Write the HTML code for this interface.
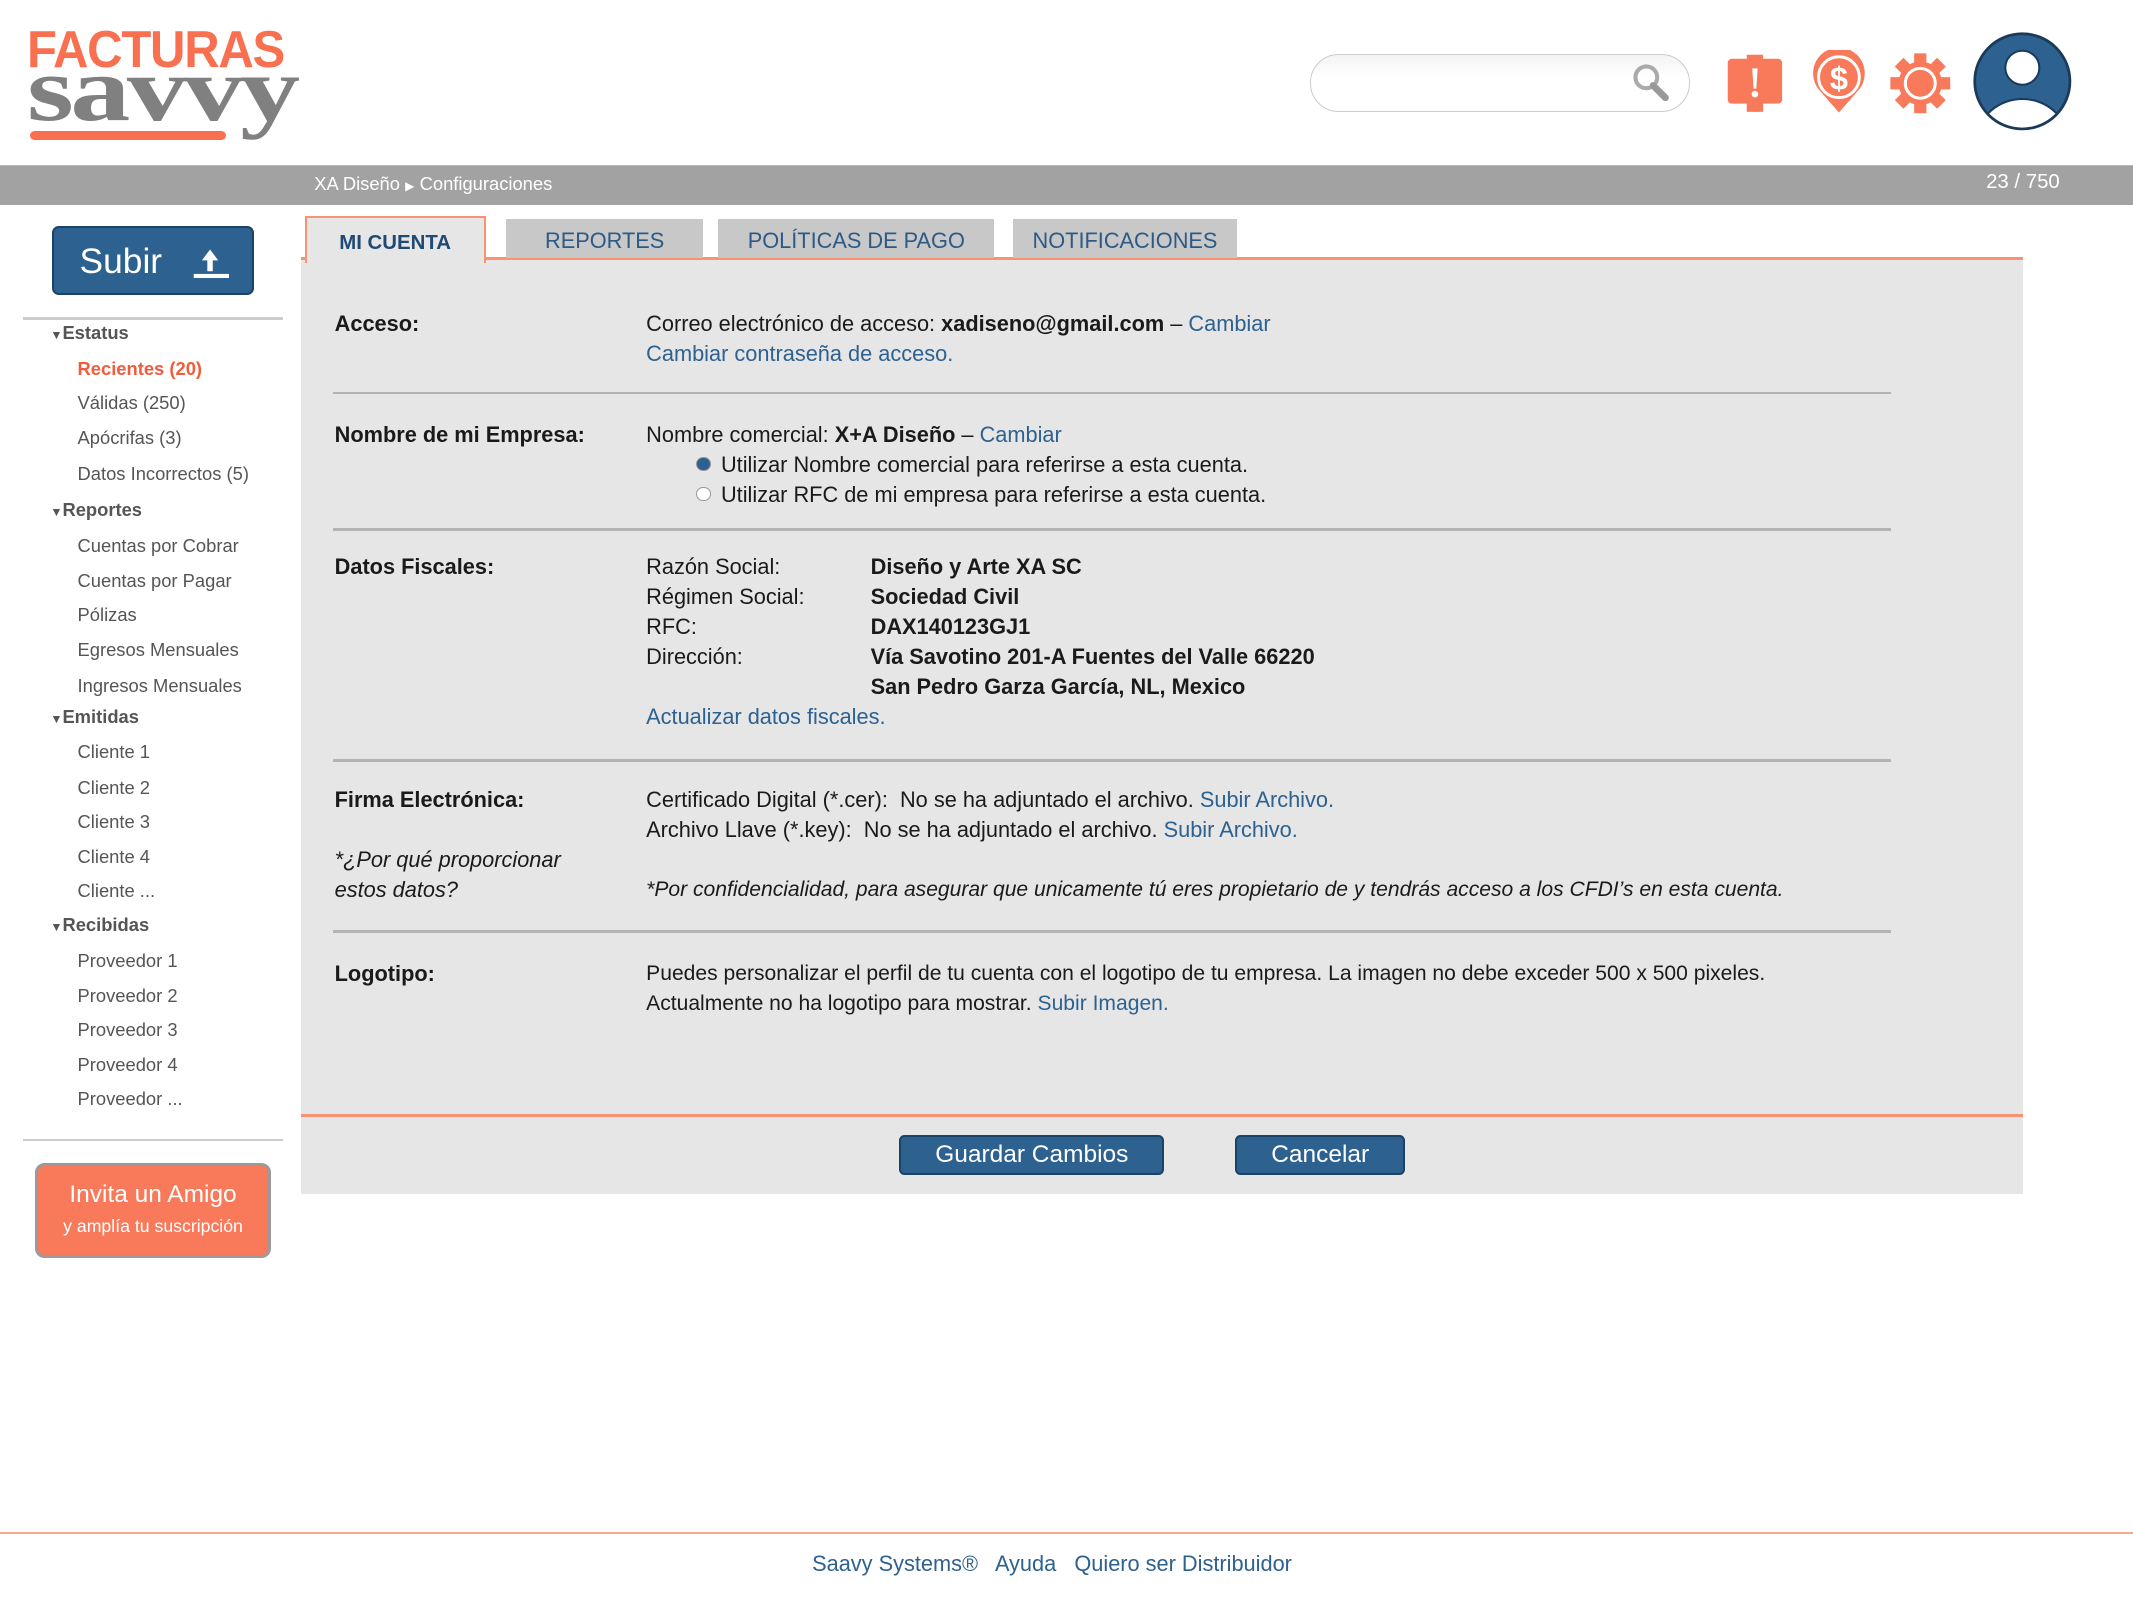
<!DOCTYPE html>
<html><head><meta charset="utf-8">
<style>
html,body{margin:0;padding:0;background:#fff;overflow:hidden}
#w{zoom:1.36033;width:1568px;height:1176px;position:relative;font-family:"Liberation Sans",sans-serif;color:#1a1a1a}
.a{position:absolute;white-space:nowrap}
.sb{font-size:13.5px;color:#555}
.sh{font-size:13.5px;color:#555;font-weight:bold}
.t{font-size:16px;line-height:22px}
.b{font-weight:bold}
.l{color:#2d6190}
.hr{position:absolute;left:245px;width:1145px;height:2px;background:#b4b4b4}
.tab{position:absolute;top:161px;height:29px;background:#c8c8c8;color:#2d5a85;font-size:16px;text-align:center;line-height:32px}
.btn{position:absolute;background:#2d6190;border:1.5px solid #1d4268;border-radius:4px;color:#fff;font-size:18px;text-align:center;box-sizing:border-box}
</style></head><body><div id="w">
<!-- logo -->
<div class="a" style="left:20px;top:14px;font-family:'Liberation Sans';font-weight:bold;font-size:38px;color:#f97050;letter-spacing:-1px;transform:scaleX(0.95);transform-origin:left">FACTURAS</div>
<div class="a" style="left:20px;top:34px;font-family:'Liberation Serif';font-weight:bold;font-size:68px;color:#808080;letter-spacing:-2px;line-height:66px;transform:scaleX(1.3);transform-origin:left">savvy</div>
<div class="a" style="left:22px;top:96px;width:144px;height:7px;border-radius:4px;background:#f97050"></div>
<!-- search -->
<div class="a" style="left:963px;top:40px;width:278px;height:41px;border:1px solid #ccc;border-radius:21px;background:linear-gradient(#f3f3f3,#fff 40%)"></div>
<svg class="a" style="left:1198px;top:45px" width="32" height="32" viewBox="0 0 32 32"><circle cx="12" cy="12" r="8" fill="none" stroke="#aaa" stroke-width="3"/><path d="M17 18 L26 27" stroke="#999" stroke-width="5" stroke-linecap="round"/></svg>
<!-- alert -->
<svg class="a" style="left:1268px;top:38px" width="46" height="46" viewBox="0 0 46 46"><rect x="16" y="2" width="12" height="42" fill="#f97a5a"/><rect x="2" y="5" width="40" height="33" rx="3" fill="#f97a5a"/><path d="M20 12 h4 l-1 15 h-2z" fill="#fff"/><circle cx="22" cy="31" r="2.4" fill="#fff"/></svg>
<!-- dollar pin -->
<svg class="a" style="left:1330px;top:37px" width="44" height="48" viewBox="0 0 44 48"><path d="M22 46 L8 30 A19 19 0 1 1 36 30 Z" fill="#f97a5a"/><circle cx="22" cy="20" r="15" fill="none" stroke="#fff" stroke-width="2.2"/><text x="22" y="29" font-family="Liberation Sans" font-weight="bold" font-size="24" fill="#fff" text-anchor="middle">$</text></svg>
<!-- gear -->
<svg class="a" style="left:1389px;top:38px" width="46" height="46" viewBox="0 0 46 46"><g fill="#f97a5a" transform="translate(23 23)"><circle r="16"/><g id="g"><rect x="-4.5" y="-22" width="9" height="10"/></g><use href="#g" transform="rotate(45)"/><use href="#g" transform="rotate(90)"/><use href="#g" transform="rotate(135)"/><use href="#g" transform="rotate(180)"/><use href="#g" transform="rotate(225)"/><use href="#g" transform="rotate(270)"/><use href="#g" transform="rotate(315)"/></g><circle cx="23" cy="23" r="11" fill="none" stroke="#fff" stroke-width="2.2"/></svg>
<!-- avatar -->
<svg class="a" style="left:1450px;top:23px" width="74" height="74" viewBox="0 0 74 74"><defs><clipPath id="c"><circle cx="37" cy="37" r="34"/></clipPath></defs><circle cx="37" cy="37" r="35" fill="#2d6190" stroke="#1b3a5a" stroke-width="2"/><g clip-path="url(#c)"><ellipse cx="37" cy="80" rx="33" ry="30" fill="#fff" stroke="#1b3a5a" stroke-width="1.5"/></g><circle cx="37" cy="27" r="12.5" fill="#fff" stroke="#1b3a5a" stroke-width="1.5"/></svg>
<!-- gray bar -->
<div class="a" style="left:0;top:121px;width:1568px;height:29px;background:#a2a2a2;border-top:1px solid #b8b8b8"></div>
<div class="a" style="left:231px;top:127px;font-size:13.5px;color:#fff">XA Diseño <span style="font-size:9px">&#9654;</span> Configuraciones</div>
<div class="a" style="left:1460px;top:126px;font-size:15px;color:#fff">23 / 750</div>
<!-- sidebar -->
<div class="btn" style="left:38px;top:166px;width:149px;height:51px;font-size:26px;line-height:50px;border-radius:5px;text-align:left;padding-left:19px">Subir <svg style="position:absolute;left:101px;top:12px" width="28" height="28" viewBox="0 0 28 28"><path d="M14 4 L8 12 H12 V20 H16 V12 H20Z" fill="#fff"/><rect x="2" y="22" width="26" height="3" fill="#fff"/></svg></div>
<div class="a" style="left:17px;top:233px;width:191px;height:2px;background:#ccc"></div>
<div class="a sh" style="left:37px;top:237px"><span style="font-size:9px">&#9660;</span>Estatus</div>
<div class="a sb" style="left:57px;top:263px;color:#f05c3c;font-weight:bold">Recientes (20)</div>
<div class="a sb" style="left:57px;top:288px">Válidas (250)</div>
<div class="a sb" style="left:57px;top:314px">Apócrifas (3)</div>
<div class="a sb" style="left:57px;top:340px">Datos Incorrectos (5)</div>
<div class="a sh" style="left:37px;top:367px"><span style="font-size:9px">&#9660;</span>Reportes</div>
<div class="a sb" style="left:57px;top:393px">Cuentas por Cobrar</div>
<div class="a sb" style="left:57px;top:419px">Cuentas por Pagar</div>
<div class="a sb" style="left:57px;top:444px">Pólizas</div>
<div class="a sb" style="left:57px;top:470px">Egresos Mensuales</div>
<div class="a sb" style="left:57px;top:496px">Ingresos Mensuales</div>
<div class="a sh" style="left:37px;top:519px"><span style="font-size:9px">&#9660;</span>Emitidas</div>
<div class="a sb" style="left:57px;top:545px">Cliente 1</div>
<div class="a sb" style="left:57px;top:571px">Cliente 2</div>
<div class="a sb" style="left:57px;top:596px">Cliente 3</div>
<div class="a sb" style="left:57px;top:622px">Cliente 4</div>
<div class="a sb" style="left:57px;top:647px">Cliente ...</div>
<div class="a sh" style="left:37px;top:672px"><span style="font-size:9px">&#9660;</span>Recibidas</div>
<div class="a sb" style="left:57px;top:698px">Proveedor 1</div>
<div class="a sb" style="left:57px;top:724px">Proveedor 2</div>
<div class="a sb" style="left:57px;top:749px">Proveedor 3</div>
<div class="a sb" style="left:57px;top:775px">Proveedor 4</div>
<div class="a sb" style="left:57px;top:800px">Proveedor ...</div>
<div class="a" style="left:17px;top:837px;width:191px;height:2px;background:#ccc"></div>
<div class="a" style="left:26px;top:855px;width:173px;height:70px;box-sizing:border-box;background:#f97a5a;border:2.5px solid #9a9a9a;border-radius:7px;color:#fff;text-align:center"><div style="font-size:18px;margin-top:11px">Invita un Amigo</div><div style="font-size:13px;margin-top:5px">y amplía tu suscripción</div></div>
<!-- panel -->
<div class="a" style="left:221px;top:190px;width:1266px;height:688px;background:#e6e6e6"></div>
<div class="a" style="left:221px;top:189px;width:1266px;height:2px;background:#f79275"></div>
<div class="a" style="left:221px;top:819px;width:1266px;height:2px;background:#f79275"></div>
<div class="a" style="left:224px;top:159px;width:130px;height:33px;background:#e6e6e6;border:2px solid #f79275;border-bottom:none;color:#1f4a74;font-weight:bold;font-size:15px;text-align:center;line-height:38px">MI CUENTA</div>
<div class="tab" style="left:372px;width:145px">REPORTES</div>
<div class="tab" style="left:528px;width:203px">POLÍTICAS DE PAGO</div>
<div class="tab" style="left:745px;width:164px">NOTIFICACIONES</div>
<!-- rows -->
<div class="a t b" style="left:246px;top:227px">Acceso:</div>
<div class="a t" style="left:475px;top:227px">Correo electrónico de acceso: <b>xadiseno@gmail.com</b> – <span class="l">Cambiar</span></div>
<div class="a t l" style="left:475px;top:249px">Cambiar contraseña de acceso.</div>
<div class="hr" style="top:288px"></div>
<div class="a t b" style="left:246px;top:309px">Nombre de mi Empresa:</div>
<div class="a t" style="left:475px;top:309px">Nombre comercial: <b>X+A Diseño</b> – <span class="l">Cambiar</span></div>
<div class="a" style="left:512px;top:336px;width:9px;height:9px;border-radius:50%;background:#2d6190;border:1px solid #999"></div>
<div class="a t" style="left:530px;top:331px">Utilizar Nombre comercial para referirse a esta cuenta.</div>
<div class="a" style="left:512px;top:358px;width:9px;height:9px;border-radius:50%;background:#fff;border:1px solid #999"></div>
<div class="a t" style="left:530px;top:353px">Utilizar RFC de mi empresa para referirse a esta cuenta.</div>
<div class="hr" style="top:388px"></div>
<div class="a t b" style="left:246px;top:406px">Datos Fiscales:</div>
<div class="a t" style="left:475px;top:406px">Razón Social:<br>Régimen Social:<br>RFC:<br>Dirección:</div>
<div class="a t b" style="left:640px;top:406px">Diseño y Arte XA SC<br>Sociedad Civil<br>DAX140123GJ1<br>Vía Savotino 201-A Fuentes del Valle 66220<br>San Pedro Garza García, NL, Mexico</div>
<div class="a t l" style="left:475px;top:516px">Actualizar datos fiscales.</div>
<div class="hr" style="top:558px"></div>
<div class="a t b" style="left:246px;top:577px">Firma Electrónica:</div>
<div class="a t" style="left:246px;top:621px;font-style:italic">*¿Por qué proporcionar<br>estos datos?</div>
<div class="a t" style="left:475px;top:577px">Certificado Digital (*.cer):&nbsp; No se ha adjuntado el archivo. <span class="l">Subir Archivo.</span></div>
<div class="a t" style="left:475px;top:599px">Archivo Llave (*.key):&nbsp; No se ha adjuntado el archivo. <span class="l">Subir Archivo.</span></div>
<div class="a t" style="left:475px;top:643px;font-style:italic;font-size:15.5px">*Por confidencialidad, para asegurar que unicamente tú eres propietario de y tendrás acceso a los CFDI’s en esta cuenta.</div>
<div class="hr" style="top:684px"></div>
<div class="a t b" style="left:246px;top:705px">Logotipo:</div>
<div class="a t" style="left:475px;top:705px;font-size:15.5px">Puedes personalizar el perfil de tu cuenta con el logotipo de tu empresa. La imagen no debe exceder 500 x 500 pixeles.</div>
<div class="a t" style="left:475px;top:727px;font-size:15.5px">Actualmente no ha logotipo para mostrar. <span class="l">Subir Imagen.</span></div>
<div class="btn" style="left:661px;top:834px;width:195px;height:30px;line-height:27px">Guardar Cambios</div>
<div class="btn" style="left:908px;top:834px;width:125px;height:30px;line-height:27px">Cancelar</div>
<!-- footer -->
<div class="a" style="left:0;top:1126px;width:1568px;height:2px;background:#f9a890"></div>
<div class="a l" style="left:597px;top:1140px;font-size:16px">Saavy Systems®&nbsp;&nbsp; Ayuda&nbsp;&nbsp; Quiero ser Distribuidor</div>
</div></body></html>
